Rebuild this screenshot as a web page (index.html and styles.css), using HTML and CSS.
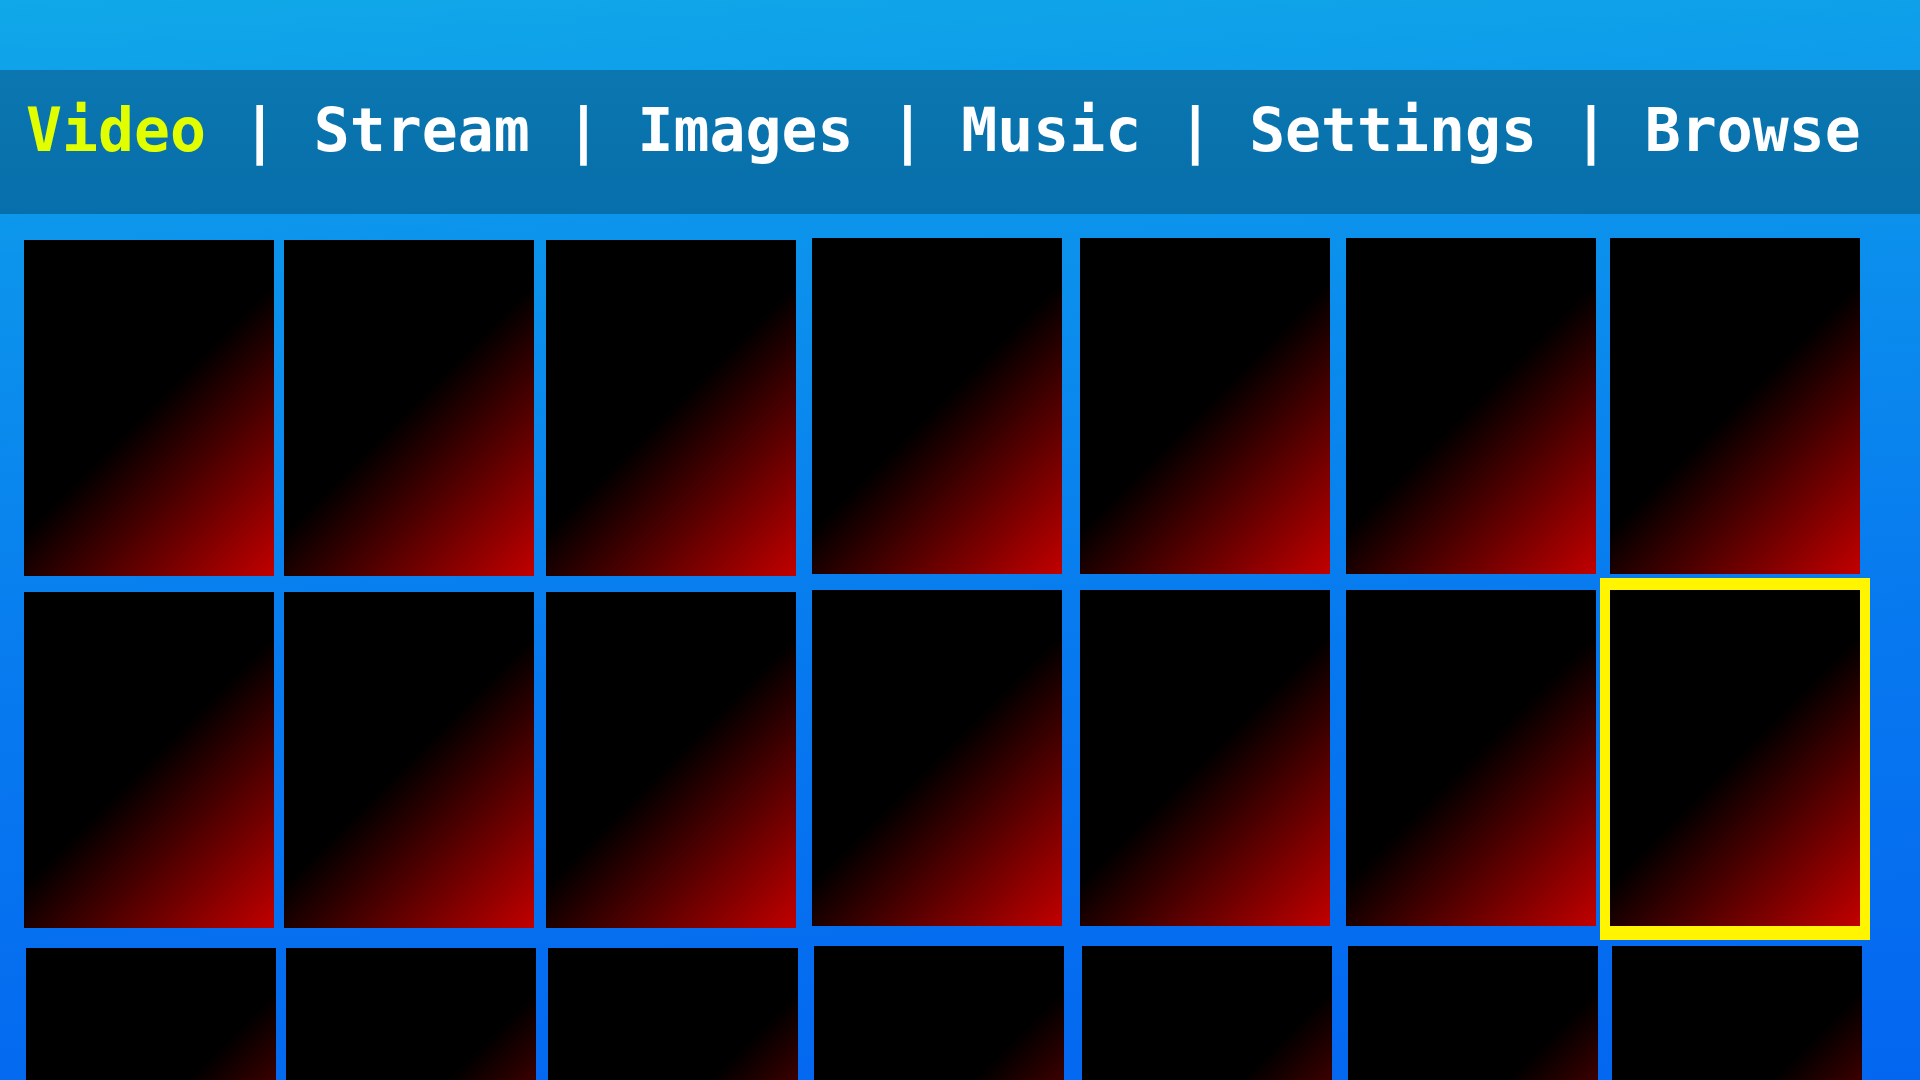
FILE: index.html
```html
<!DOCTYPE html>
<html lang="en">
<head>
<meta charset="utf-8">
<title>Video</title>
<link rel="stylesheet" href="styles.css">
</head>
<body>
<div class="app">
  <div class="topbar"></div>
  <nav class="nav"><span class="nav-item active">Video</span><span class="sep">&nbsp;|&nbsp;</span><span class="nav-item">Stream</span><span class="sep">&nbsp;|&nbsp;</span><span class="nav-item">Images</span><span class="sep">&nbsp;|&nbsp;</span><span class="nav-item">Music</span><span class="sep">&nbsp;|&nbsp;</span><span class="nav-item">Settings</span><span class="sep">&nbsp;|&nbsp;</span><span class="nav-item">Browse</span></nav>
  <main class="grid">
    <div class="tile"></div>
    <div class="tile"></div>
    <div class="tile"></div>
    <div class="tile up"></div>
    <div class="tile up"></div>
    <div class="tile up"></div>
    <div class="tile up"></div>

    <div class="tile"></div>
    <div class="tile"></div>
    <div class="tile"></div>
    <div class="tile up"></div>
    <div class="tile up"></div>
    <div class="tile up"></div>
    <div class="tile up focus"></div>

    <div class="tile shift"></div>
    <div class="tile shift"></div>
    <div class="tile shift"></div>
    <div class="tile shift up"></div>
    <div class="tile shift up"></div>
    <div class="tile shift up"></div>
    <div class="tile shift up"></div>
  </main>
</div>
</body>
</html>
```
FILE: styles.css
```css
html, body {
  margin: 0;
  padding: 0;
  width: 1920px;
  height: 1080px;
  overflow: hidden;
}

body {
  background: linear-gradient(177deg, #10a8e8 0%, #0c94ec 22%, #0779ef 60%, #0366f0 100%);
  font-family: "DejaVu Sans Mono", "Liberation Mono", monospace;
}

.app {
  display: flex;
  flex-direction: column;
}

.topbar {
  height: 70px;
}

.nav {
  height: 144px;
  box-sizing: border-box;
  padding: 26px 0 0 26px;
  background: linear-gradient(to bottom, #0b76b0, #076fab);
  color: #ffffff;
  font-size: 59.75px;
  font-weight: bold;
  line-height: 70px;
  white-space: nowrap;
}

.nav-item.active {
  color: #e2ff00;
}

.grid {
  display: grid;
  grid-template-columns: 260px 262px 266px 268px 266px 264px 250px;
  grid-template-rows: 352px 356px 336px;
  padding: 26px 0 0 24px;
}

.tile {
  position: relative;
  width: 250px;
  height: 336px;
  align-self: start;
  justify-self: start;
  background: linear-gradient(135deg, #000000 50%, #c20000 100%);
}

.tile.up {
  margin-top: -2px;
}

.tile.shift {
  margin-left: 2px;
}

.tile.focus::after {
  content: "";
  position: absolute;
  top: -12px;
  left: -10px;
  right: -10px;
  bottom: -14px;
  border-style: solid;
  border-color: #fff500;
  border-width: 12px 10px 14px 10px;
}
```
